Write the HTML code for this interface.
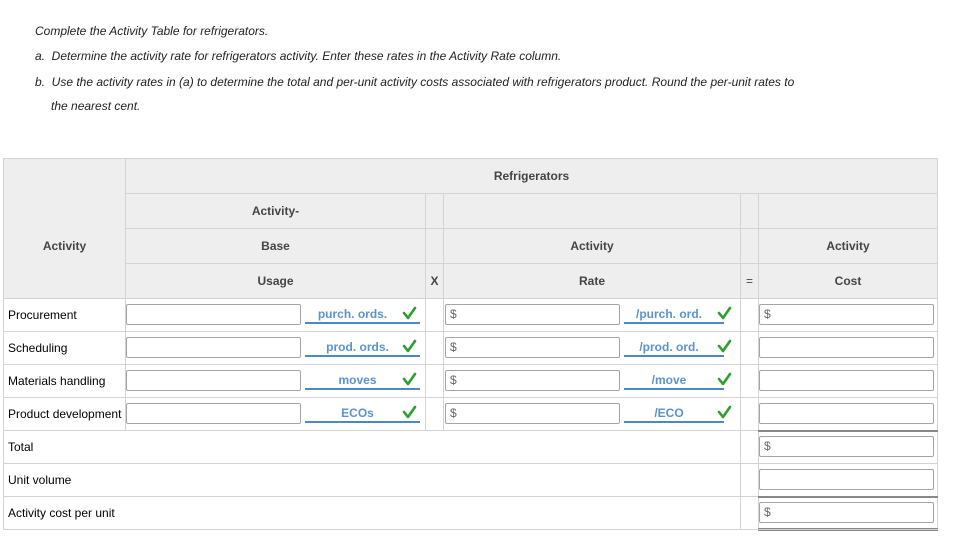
<!DOCTYPE html><html><head><style>
body{margin:0;width:973px;height:536px;background:#fff;font-family:"Liberation Sans",Arial,sans-serif;position:relative;overflow:hidden}
.a{position:absolute}
.t{font-size:12px;font-style:italic;color:#222}
.h{background:#eee;border:1px solid #d3d3d3;box-sizing:border-box}
.hl{font-size:12px;font-weight:bold;color:#444;text-align:center}
.c{border:1px solid #d3d3d3;box-sizing:border-box}
.lb{font-size:12px;color:#000}
.in{border:1px solid #a5a5a5;border-radius:2px;box-sizing:border-box;height:21px;background:#fff;font-size:12px;color:#666;padding-left:4px;line-height:19px}
.u{border-bottom:2px solid #4a8ac4;font-size:12px;font-weight:bold;color:#5a93cf;text-align:center;box-sizing:border-box;height:22px;line-height:24px}
.hr{position:absolute;height:1px;background:#d3d3d3}
</style></head><body>
<div class="a t" style="left:35px;top:24px">Complete the Activity Table for refrigerators.</div>
<div class="a t" style="left:35px;top:49px">a.&nbsp; Determine the activity rate for refrigerators activity. Enter these rates in the Activity Rate column.</div>
<div class="a t" style="left:35px;top:75px">b.&nbsp; Use the activity rates in (a) to determine the total and per-unit activity costs associated with refrigerators product. Round the per-unit rates to</div>
<div class="a t" style="left:51px;top:99px">the nearest cent.</div>

<div class="a h" style="left:3px;top:158px;width:123px;height:141px"></div>
<div class="a hl" style="left:3px;top:239px;width:123px">Activity</div>
<div class="a h" style="left:125px;top:158px;width:813px;height:36px"></div>
<div class="a hl" style="left:125px;top:169px;width:813px">Refrigerators</div>
<div class="a h" style="left:125px;top:193px;width:301px;height:106px"></div>
<div class="a h" style="left:425px;top:193px;width:19px;height:106px"></div>
<div class="a h" style="left:443px;top:193px;width:298px;height:106px"></div>
<div class="a h" style="left:740px;top:193px;width:19px;height:106px"></div>
<div class="a h" style="left:758px;top:193px;width:180px;height:106px"></div>
<div class="hr" style="left:125px;top:228px;width:813px"></div>
<div class="hr" style="left:125px;top:263px;width:813px"></div>
<div class="a hl" style="left:125px;top:204px;width:301px">Activity-</div>
<div class="a hl" style="left:125px;top:239px;width:301px">Base</div>
<div class="a hl" style="left:125px;top:274px;width:301px">Usage</div>
<div class="a hl" style="left:425px;top:274px;width:19px">X</div>
<div class="a hl" style="left:443px;top:239px;width:298px">Activity</div>
<div class="a hl" style="left:443px;top:274px;width:298px">Rate</div>
<div class="a hl" style="left:740px;top:274px;width:19px;font-weight:normal">=</div>
<div class="a hl" style="left:758px;top:239px;width:180px">Activity</div>
<div class="a hl" style="left:758px;top:274px;width:180px">Cost</div>

<div class="a c" style="left:3px;top:298px;width:935px;height:232px"></div>
<div class="hr" style="left:3px;top:331px;width:935px"></div>
<div class="hr" style="left:3px;top:364px;width:935px"></div>
<div class="hr" style="left:3px;top:397px;width:935px"></div>
<div class="hr" style="left:3px;top:430px;width:935px"></div>
<div class="hr" style="left:3px;top:463px;width:935px"></div>
<div class="hr" style="left:3px;top:496px;width:935px"></div>
<div class="a" style="left:125px;top:298px;width:1px;height:133px;background:#d3d3d3"></div>
<div class="a" style="left:425px;top:298px;width:1px;height:133px;background:#d3d3d3"></div>
<div class="a" style="left:443px;top:298px;width:1px;height:133px;background:#d3d3d3"></div>
<div class="a" style="left:740px;top:298px;width:1px;height:231px;background:#d3d3d3"></div>
<div class="a" style="left:758px;top:298px;width:1px;height:231px;background:#d3d3d3"></div>

<div class="a lb" style="left:8px;top:308px">Procurement</div>
<div class="a lb" style="left:8px;top:341px">Scheduling</div>
<div class="a lb" style="left:8px;top:374px">Materials handling</div>
<div class="a lb" style="left:8px;top:407px">Product development</div>
<div class="a lb" style="left:8px;top:440px">Total</div>
<div class="a lb" style="left:8px;top:473px">Unit volume</div>
<div class="a lb" style="left:8px;top:506px">Activity cost per unit</div>

<div class="a in" style="left:126px;top:304px;width:175px"></div>
<div class="a in" style="left:126px;top:337px;width:175px"></div>
<div class="a in" style="left:126px;top:370px;width:175px"></div>
<div class="a in" style="left:126px;top:403px;width:175px"></div>
<div class="a u" style="left:305px;top:302px;width:115px;padding-right:20px">purch. ords.</div>
<div class="a u" style="left:305px;top:335px;width:115px;padding-right:10px">prod. ords.</div>
<div class="a u" style="left:305px;top:368px;width:115px;padding-right:10px">moves</div>
<div class="a u" style="left:305px;top:401px;width:115px;padding-right:10px">ECOs</div>

<div class="a in" style="left:445px;top:304px;width:175px">$</div>
<div class="a in" style="left:445px;top:337px;width:175px">$</div>
<div class="a in" style="left:445px;top:370px;width:175px">$</div>
<div class="a in" style="left:445px;top:403px;width:175px">$</div>
<div class="a u" style="left:624px;top:302px;width:100px;padding-right:10px">/purch. ord.</div>
<div class="a u" style="left:624px;top:335px;width:100px;padding-right:10px">/prod. ord.</div>
<div class="a u" style="left:624px;top:368px;width:100px;padding-right:10px">/move</div>
<div class="a u" style="left:624px;top:401px;width:100px;padding-right:10px">/ECO</div>

<svg class="a" style="left:0;top:0" width="973" height="536">
<g fill="none" stroke="#2e9e2e" stroke-width="2.6" stroke-linecap="round" stroke-linejoin="round">
<path d="M404 313 l4 5 l7 -10"/><path d="M404 346 l4 5 l7 -10"/><path d="M404 379 l4 5 l7 -10"/><path d="M404 412 l4 5 l7 -10"/>
<path d="M719 313 l4 5 l7 -10"/><path d="M719 346 l4 5 l7 -10"/><path d="M719 379 l4 5 l7 -10"/><path d="M719 412 l4 5 l7 -10"/>
</g></svg>

<div class="a in" style="left:759px;top:304px;width:175px">$</div>
<div class="a in" style="left:759px;top:337px;width:175px"></div>
<div class="a in" style="left:759px;top:370px;width:175px"></div>
<div class="a in" style="left:759px;top:403px;width:175px"></div>
<div class="a" style="left:758px;top:430px;width:180px;height:2px;background:#888"></div>
<div class="a in" style="left:759px;top:436px;width:175px">$</div>
<div class="a in" style="left:759px;top:469px;width:175px"></div>
<div class="a" style="left:758px;top:496px;width:180px;height:2px;background:#888"></div>
<div class="a in" style="left:759px;top:502px;width:175px">$</div>
<div class="a" style="left:758px;top:528px;width:180px;height:1px;background:#888"></div>
<div class="a" style="left:758px;top:530px;width:180px;height:1px;background:#888"></div>
</body></html>
